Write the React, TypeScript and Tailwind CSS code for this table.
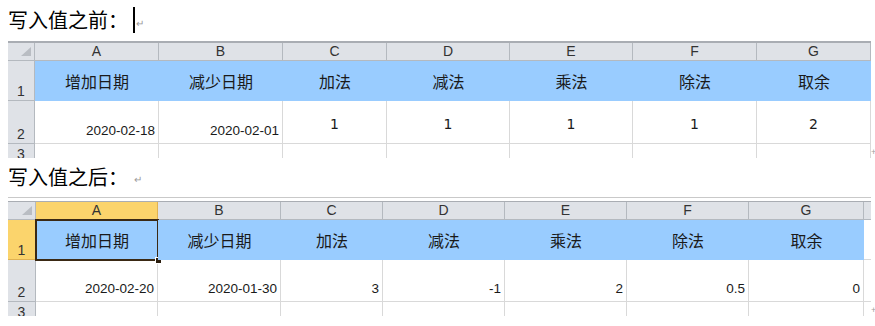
import React from 'react';

const cjk = "font-['Noto_Sans_CJK_SC','Noto_Sans',sans-serif]";
const arial = "font-['Liberation_Sans',Arial,sans-serif]";
const dejavu = "font-['DejaVu_Sans',sans-serif]";

const letters = ['A', 'B', 'C', 'D', 'E', 'F', 'G'];
const titles = ['增加日期', '减少日期', '加法', '减法', '乘法', '除法', '取余'];

const before = [
  { text: '2020-02-18', kind: 'date' },
  { text: '2020-02-01', kind: 'date' },
  { text: '1', kind: 'num' },
  { text: '1', kind: 'num' },
  { text: '1', kind: 'num' },
  { text: '1', kind: 'num' },
  { text: '2', kind: 'num' },
];

const after = ['2020-02-20', '2020-01-30', '3', '-1', '2', '0.5', '0'];

function Corner() {
  return (
    <div className="flex items-end justify-end border-r border-b border-[#b4b9bf] bg-[#dfe2e7] pb-[4px] pr-[3px]">
      <svg width="10" height="9" viewBox="0 0 10 9">
        <path d="M10 0 L10 9 L0 9 Z" fill="#b9bdc3" />
      </svg>
    </div>
  );
}

function ColHeader({ label, selected }: { label: string; selected?: boolean }) {
  return (
    <div
      className={`flex items-center justify-center border-r border-b text-[14px] text-[#333] ${arial} ${
        selected ? 'bg-[#fbd46c] border-r-[#e0b252] border-b-[#c58a2e]' : 'bg-[#dfe2e7] border-[#b4b9bf]'
      }`}
    >
      {label}
    </div>
  );
}

function RowHeader({ label, selected }: { label: string; selected?: boolean }) {
  return (
    <div
      className={`flex items-end justify-center border-r border-b pb-[1px] text-[14px] leading-[16px] text-[#333] ${arial} ${
        selected ? 'bg-[#fbd46c] border-b-[#e0b252] border-r-[#c58a2e]' : 'bg-[#dfe2e7] border-[#b4b9bf]'
      }`}
    >
      {label}
    </div>
  );
}

function CutRowHeader() {
  return (
    <div className={`overflow-hidden border-r border-[#b4b9bf] bg-[#dfe2e7] pt-[2px] text-center text-[14px] leading-[16px] text-[#333] ${arial}`}>
      3
    </div>
  );
}

function BlueCell({ text, selected }: { text: string; selected?: boolean }) {
  return (
    <div className={`relative flex items-center justify-center bg-[#99ccff] text-[16px] text-[#1a1a1a] ${cjk}`}>
      {text}
      {selected && (
        <>
          <div className="absolute -top-px -left-px -right-px -bottom-px border-2 border-[#3a2914]" />
          <div className="absolute -right-[4px] -bottom-[4px] h-[7px] w-[7px] border border-white bg-[#2b1d0e]" />
        </>
      )}
    </div>
  );
}

function Title({ text, cursor }: { text: string; cursor?: boolean }) {
  return (
    <div className={`ml-2 flex h-[24px] items-center text-[20px] leading-[24px] text-black ${cjk}`}>
      <span>{text}</span>
      {cursor ? (
        <>
          <span className="ml-[5px] h-[26px] w-[2px] bg-black" />
          <span className="ml-[1px] mt-[6px] text-[10px] leading-none text-[#9a9a9a]">↵</span>
        </>
      ) : (
        <span className="ml-[6px] mt-[4px] text-[10px] leading-none text-[#9a9a9a]">↵</span>
      )}
    </div>
  );
}

function Marker() {
  return <span className="mb-[2px] text-[9px] leading-none text-[#a0a0a0]">+</span>;
}

export default function App() {
  return (
    <div className="h-[326px] w-[875px] overflow-hidden bg-white">
      <div className="h-[41px] pt-[8px]">
        <Title text="写入值之前：" cursor />
      </div>

      <div className="flex items-end">
        <div className="ml-2 w-[863px] border-t-2 border-[#a9adb3]">
          <div className="grid grid-cols-[27px_124px_124px_104px_123px_123px_124px_114px] grid-rows-[18px_40px_43px_14px]">
            <Corner />
            {letters.map((l) => (
              <ColHeader key={l} label={l} />
            ))}

            <RowHeader label="1" />
            {titles.map((t) => (
              <BlueCell key={t} text={t} />
            ))}

            <RowHeader label="2" />
            {before.map((c, i) =>
              c.kind === 'date' ? (
                <div
                  key={i}
                  className={`flex items-end justify-end border-r border-b border-[#d9d9d9] pb-[2px] pr-[3px] text-[13.5px] text-[#1a1a1a] ${arial}`}
                >
                  {c.text}
                </div>
              ) : (
                <div
                  key={i}
                  className={`flex items-center justify-center border-r border-b border-[#d9d9d9] pt-[4px] text-[14px] text-[#1a1a1a] ${dejavu}`}
                >
                  {c.text}
                </div>
              )
            )}

            <CutRowHeader />
            {letters.map((l) => (
              <div key={l} className="border-r border-[#d9d9d9]" />
            ))}
          </div>
        </div>
        <Marker />
      </div>

      <div className="h-[39px] pt-[7px]">
        <Title text="写入值之后：" />
      </div>

      <div className="flex items-end">
        <div className="ml-2 w-[863px] border-t border-[#c9c9c9] pt-[3px]">
          <div className="grid grid-cols-[28px_122px_123px_102px_122px_122px_122px_115px_7px] grid-rows-[18px_40px_42px_14px] border-t border-[#a9adb3]">
            <Corner />
            {letters.map((l, i) => (
              <ColHeader key={l} label={l} selected={i === 0} />
            ))}
            <div className="border-b border-[#b4b9bf] bg-[#dfe2e7]" />

            <RowHeader label="1" selected />
            {titles.map((t, i) => (
              <BlueCell key={t} text={t} selected={i === 0} />
            ))}
            <div className="border-b border-[#d9d9d9]" />

            <RowHeader label="2" />
            {after.map((v, i) => (
              <div
                key={i}
                className={`flex items-end justify-end border-r border-b border-[#d9d9d9] pb-[2px] pr-[3px] text-[13.5px] text-[#1a1a1a] ${arial}`}
              >
                {v}
              </div>
            ))}
            <div className="border-b border-[#d9d9d9]" />

            <CutRowHeader />
            {letters.map((l) => (
              <div key={l} className="border-r border-[#d9d9d9]" />
            ))}
            <div />
          </div>
        </div>
        <Marker />
      </div>
    </div>
  );
}
